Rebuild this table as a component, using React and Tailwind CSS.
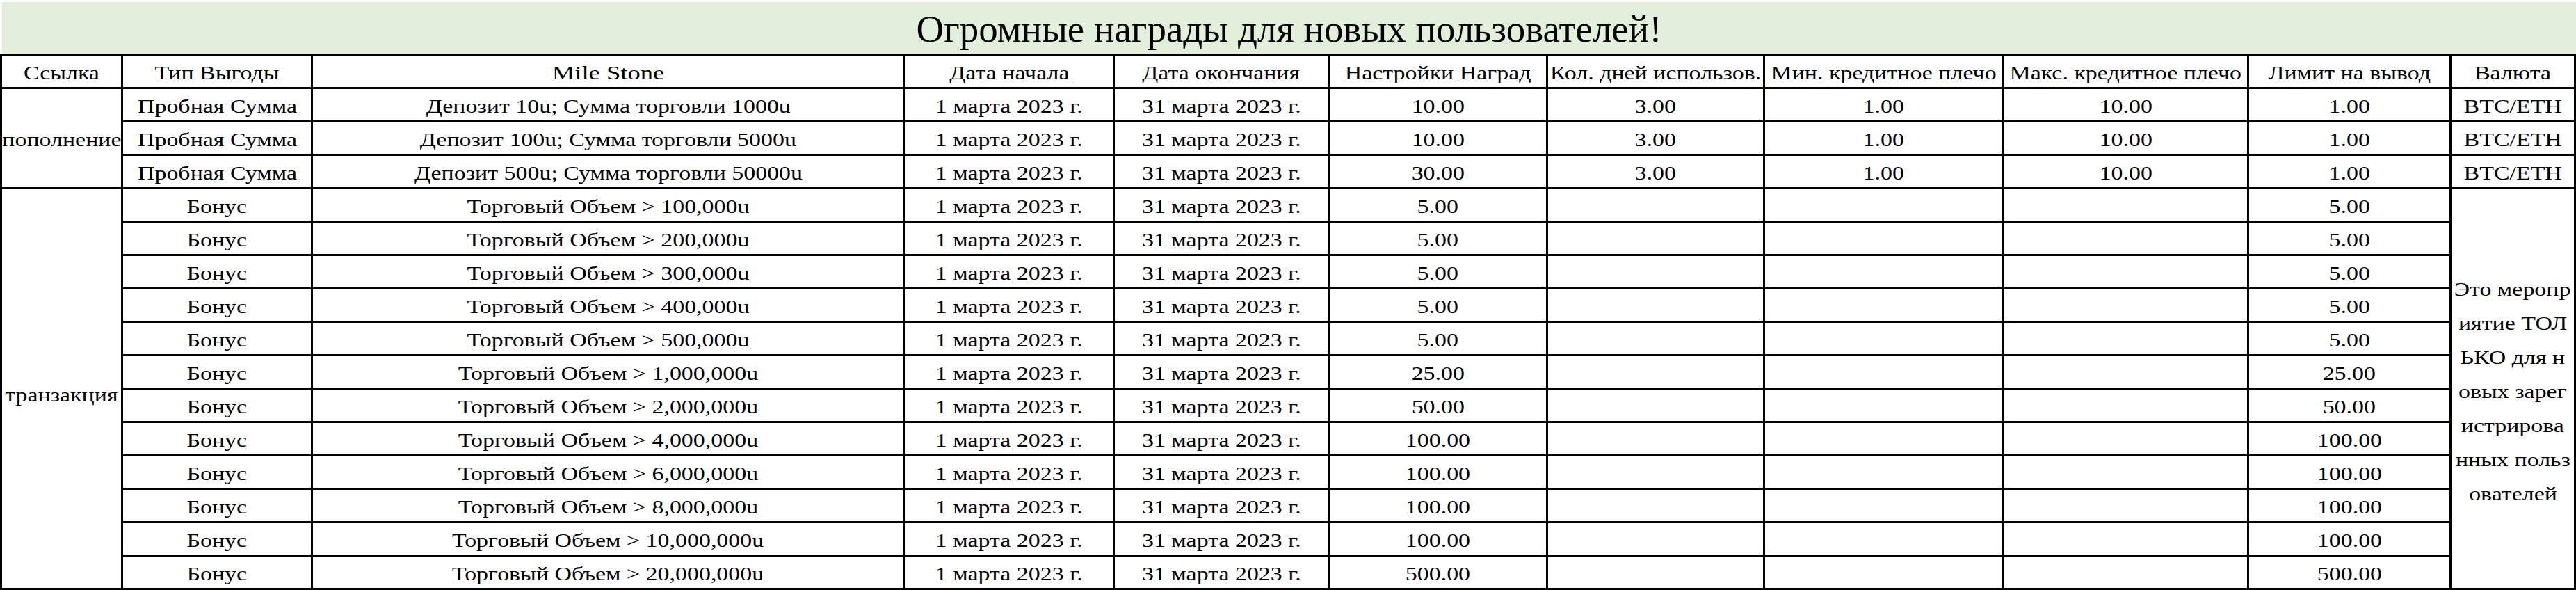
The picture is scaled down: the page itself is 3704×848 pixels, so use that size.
const deposits = [
  { stone: "Депозит 10u; Сумма торговли 1000u", reward: "10.00" },
  { stone: "Депозит 100u; Сумма торговли 5000u", reward: "10.00" },
  { stone: "Депозит 500u; Сумма торговли 50000u", reward: "30.00" },
];

const bonuses = [
  ["100,000u", "5.00"],
  ["200,000u", "5.00"],
  ["300,000u", "5.00"],
  ["400,000u", "5.00"],
  ["500,000u", "5.00"],
  ["1,000,000u", "25.00"],
  ["2,000,000u", "50.00"],
  ["4,000,000u", "100.00"],
  ["6,000,000u", "100.00"],
  ["8,000,000u", "100.00"],
  ["10,000,000u", "100.00"],
  ["20,000,000u", "500.00"],
];

const headers = [
  "Ссылка",
  "Тип Выгоды",
  "Mile Stone",
  "Дата начала",
  "Дата окончания",
  "Настройки Наград",
  "Кол. дней использов.",
  "Мин. кредитное плечо",
  "Макс. кредитное плечо",
  "Лимит на вывод",
  "Валюта",
];

const note = ["Это меропр", "иятие ТОЛ", "ЬКО для н", "овых зарег", "истрирова", "нных польз", "ователей"];

// one spreadsheet cell; text is stretched a bit wider like the source sheet
const Cell = ({ children, className = "", wide = false }) => (
  <div className={`bg-white flex justify-center overflow-visible whitespace-nowrap ${className || "items-center pt-[5px]"}`}>
    <span className={`inline-block ${wide ? "scale-x-[1.38]" : "scale-x-[1.28]"}`}>{children}</span>
  </div>
);

export default function App() {
  return (
    <div className="w-[3704px] h-[848px] bg-white pt-[3px] text-black text-[26.5px] leading-none font-['Liberation_Serif',serif]">
      {/* title band */}
      <div className="ml-[3px] h-[74px] bg-[#e2efda] flex items-center justify-center pt-[2px]">
        <h1 className="text-[55px] leading-none font-normal">Огромные награды для новых пользователей!</h1>
      </div>

      {/* sheet */}
      <div className="grid grid-cols-[171px_270px_849px_298px_306px_311px_309px_341px_349px_288px_176px] auto-rows-[45px] gap-[3px] p-[3px] bg-black">
        {headers.map((h) => (
          <Cell key={h} wide={h === "Mile Stone"}>{h}</Cell>
        ))}

        {deposits.map((d, i) => (
          <>
            {i === 0 && <Cell className="row-span-3 items-center pt-[5px]">пополнение</Cell>}
            <Cell>Пробная Сумма</Cell>
            <Cell>{d.stone}</Cell>
            <Cell>1 марта 2023 г.</Cell>
            <Cell>31 марта 2023 г.</Cell>
            <Cell>{d.reward}</Cell>
            <Cell>3.00</Cell>
            <Cell>1.00</Cell>
            <Cell>10.00</Cell>
            <Cell>1.00</Cell>
            <Cell>BTC/ETH</Cell>
          </>
        ))}

        {bonuses.map(([vol, amt], i) => (
          <>
            {i === 0 && <Cell className="row-span-12 items-start pt-[283px]">транзакция</Cell>}
            <Cell>Бонус</Cell>
            <Cell>Торговый Объем &gt; {vol}</Cell>
            <Cell>1 марта 2023 г.</Cell>
            <Cell>31 марта 2023 г.</Cell>
            <Cell>{amt}</Cell>
            <Cell />
            <Cell />
            <Cell />
            <Cell>{amt}</Cell>
            {i === 0 && (
              <div className="row-span-12 bg-white flex flex-col items-center justify-center pt-[10px] leading-[49px] whitespace-nowrap">
                {note.map((line) => (
                  <span key={line} className="inline-block scale-x-[1.28]">{line}</span>
                ))}
              </div>
            )}
          </>
        ))}
      </div>
    </div>
  );
}
